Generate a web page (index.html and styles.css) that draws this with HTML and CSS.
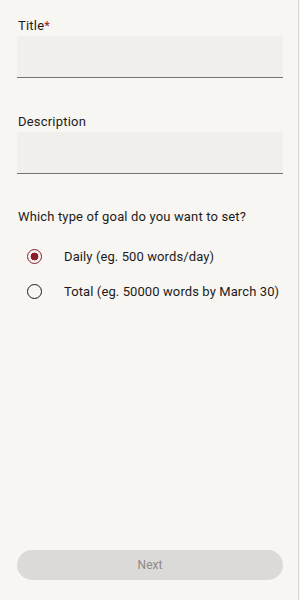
FILE: index.html
```html
<!DOCTYPE html>
<html lang="en">
<head>
    <meta charset="UTF-8">
    <meta name="viewport" content="width=device-width, initial-scale=1.0">
    <title>New goal</title>
    <link rel="stylesheet" href="styles.css">
</head>
<body>
    <div class="screen">
        <form class="goal-form">
            <label class="field">
                <span class="field-label">Title<span class="req">*</span></span>
                <input type="text" class="field-input">
            </label>
            <label class="field">
                <span class="field-label">Description</span>
                <input type="text" class="field-input">
            </label>

            <p class="question">Which type of goal do you want to set?</p>
            <div class="options">
                <label class="option">
                    <input type="radio" name="type" checked>
                    <span class="dot"></span>
                    <span>Daily (eg. 500 words/day)</span>
                </label>
                <label class="option">
                    <input type="radio" name="type">
                    <span class="dot"></span>
                    <span>Total (eg. 50000 words by March 30)</span>
                </label>
            </div>
        </form>
        <button class="next" disabled>Next</button>
    </div>
</body>
</html>
```

FILE: styles.css
```css
*{
    margin: 0;
    padding: 0;
    box-sizing: border-box;
}
body{
    font-family: Roboto, "Noto Sans", sans-serif;
    background-color: #f7f6f3;
    color: #1d1b1a;
}
.screen{
    width: 299px;
    height: 600px;
    border-right: 1px solid #d6d4d1;
    padding: 17px 17px 20px 17px;
    display: flex;
    flex-direction: column;
}
.goal-form{
    flex: 1;
}
.field{
    display: block;
    margin-bottom: 35px;
}
.field-label{
    display: block;
    font-size: 13px;
    line-height: 18px;
    padding-left: 1px;
    margin-bottom: 1px;
    letter-spacing: .2px;
}
.req{
    color: #9b1c2e;
}
.field-input{
    display: block;
    width: 266px;
    height: 42px;
    border: none;
    border-bottom: 1px solid #747270;
    background-color: #f1eeeb;
    outline: none;
}
.question{
    font-size: 13px;
    line-height: 18px;
    padding-left: 1px;
    margin-top: -1px;
    letter-spacing: .15px;
}
.options{
    margin-top: 13px;
}
.option{
    display: flex;
    align-items: center;
    height: 35px;
    font-size: 13px;
    letter-spacing: .1px;
    white-space: nowrap;
}
.option input{
    display: none;
}
.dot{
    flex: none;
    width: 15px;
    height: 15px;
    margin: 0 22px 0 10px;
    border: 1.8px solid #1d1b1a;
    border-radius: 50%;
}
.option input:checked + .dot{
    border-color: #8c1c2c;
    background: radial-gradient(circle, #8c1c2c 3.6px, transparent 4.2px);
}
.next{
    width: 266px;
    height: 30px;
    border: none;
    border-radius: 15px;
    background-color: #dcdad8;
    color: #8c8a88;
    font-family: Roboto, sans-serif;
    font-size: 12px;
}
```
